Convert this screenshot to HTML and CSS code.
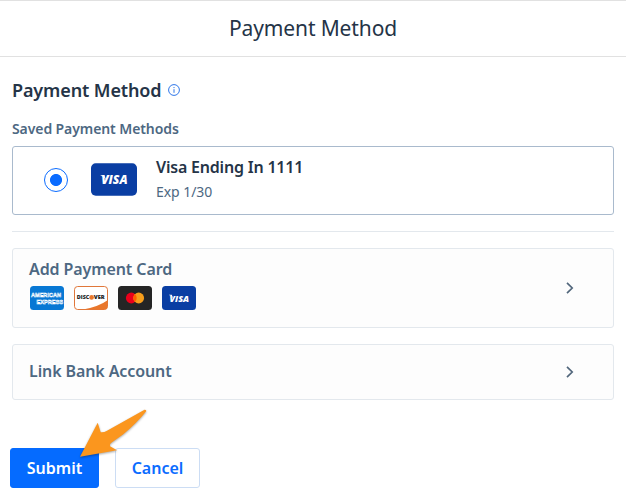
FILE: index.html
```html
<!DOCTYPE html>
<html lang="en">
<head>
    <meta charset="UTF-8">
    <meta name="viewport" content="width=device-width, initial-scale=1.0">
    <title>Payment Method</title>
    <link rel="stylesheet" href="styles.css">
</head>
<body>
    <header class="header">
        <h1>Payment Method</h1>
    </header>

    <main class="container">
        <div class="section-title">
            <h2>Payment Method</h2>
            <svg class="info-icon" viewBox="0 0 12 12">
                <circle cx="6" cy="6" r="5.4"/>
                <path d="M6 5.2v3.6M6 3v1.1"/>
            </svg>
        </div>

        <h3 class="label">Saved Payment Methods</h3>
        <label class="saved-card">
            <input type="radio" name="method" checked>
            <svg class="card-logo" viewBox="0 0 34 24">
                <rect width="34" height="24" rx="3.5" fill="#0a3ea3"/>
                <text class="visa" x="17.3" y="15.5" textLength="19.5" lengthAdjust="spacingAndGlyphs">VISA</text>
                <path d="M7 8.8h2.8l1.4 3.6Q9.6 9.8 7 9.1z" fill="#fff"/>
            </svg>
            <span class="card-info">
                <span class="card-name">Visa Ending In 1111</span>
                <span class="card-exp">Exp 1/30</span>
            </span>
        </label>

        <hr>

        <div class="option option-card">
            <div class="option-body">
                <div class="option-name">Add Payment Card</div>
                <div class="logos">
                    <svg viewBox="0 0 34 24">
                        <rect width="34" height="24" rx="3.5" fill="#0878d4"/>
                        <text class="amex" x="1" y="10.5" textLength="30" lengthAdjust="spacingAndGlyphs">AMERICAN</text>
                        <text class="amex" x="6.5" y="17.7" textLength="26.5" lengthAdjust="spacingAndGlyphs">EXPRESS</text>
                    </svg>
                    <svg viewBox="0 0 34 24">
                        <rect x="0.5" y="0.5" width="33" height="23" rx="3.2" fill="#fff" stroke="#e0773a"/>
                        <path d="M33.5 14.2V20.5a3 3 0 0 1-3 3H9Q25 20.5 33.5 14.2z" fill="#e9772c"/>
                        <text class="discover" x="2.8" y="13.3" textLength="12.5" lengthAdjust="spacingAndGlyphs">DISC</text>
                        <circle cx="17.6" cy="11.4" r="2.3" fill="#e9772c"/>
                        <text class="discover" x="19.7" y="13.3" textLength="11" lengthAdjust="spacingAndGlyphs">VER</text>
                    </svg>
                    <svg viewBox="0 0 34 24">
                        <rect width="34" height="24" rx="3.5" fill="#252525"/>
                        <circle cx="13.3" cy="12" r="5.4" fill="#eb001b"/>
                        <circle cx="20.7" cy="12" r="5.4" fill="#f79e1b"/>
                        <path d="M17 8.07a5.4 5.4 0 0 1 0 7.86a5.4 5.4 0 0 1 0-7.86z" fill="#ff5f00"/>
                    </svg>
                    <svg viewBox="0 0 34 24">
                        <rect width="34" height="24" rx="3.5" fill="#0a3ea3"/>
                        <text class="visa" x="17.3" y="15.5" textLength="19.5" lengthAdjust="spacingAndGlyphs">VISA</text>
                        <path d="M7 8.8h2.8l1.4 3.6Q9.6 9.8 7 9.1z" fill="#fff"/>
                    </svg>
                </div>
            </div>
            <svg class="chevron" viewBox="0 0 8 12">
                <path d="M1 0.8L6.2 6L1 11.2"/>
            </svg>
        </div>

        <div class="option">
            <div class="option-name">Link Bank Account</div>
            <svg class="chevron" viewBox="0 0 8 12">
                <path d="M1 0.8L6.2 6L1 11.2"/>
            </svg>
        </div>
    </main>

    <div class="actions">
        <button class="btn btn-primary">Submit</button>
        <button class="btn">Cancel</button>
        <svg class="pointer" viewBox="0 0 76 56">
            <path d="M4 51.7L21.7 17.7L24.7 27.3Q28 27.6 31 25.8L68.500 4.7Q70.700 4.500 70.2 6.300Q61 18 47 29.500L35 38Q33.400 39.500 34 41.200L41 45.200z"/>
        </svg>
    </div>
</body>
</html>
```
FILE: styles.css
```css
:root {
    --text: #253447;
    --muted: #4d6882;
    --blue: #0b6cff;
    --border: #e3e8ed;
    --card-border: #a9bacd;
}

* {
    box-sizing: border-box;
}

body {
    margin: 0;
    font-family: "Noto Sans", sans-serif;
    color: var(--text);
    background-color: #fff;
    overflow: hidden;
}

h1, h2, h3 {
    margin: 0;
}

.header {
    height: 57px;
    border-top: 1px solid #e1e1e1;
    border-bottom: 1px solid #e1e1e1;
    text-align: center;
}

.header h1 {
    font-size: 21px;
    font-weight: 400;
    line-height: 54px;
    letter-spacing: -0.12px;
}

.container {
    padding: 21px 12px 0;
}

.section-title {
    display: flex;
    align-items: center;
    gap: 7px;
    height: 24px;
}

.section-title h2 {
    font-size: 18px;
    font-weight: 600;
    line-height: 24px;
    letter-spacing: -0.12px;
}

.info-icon {
    width: 12px;
    height: 12px;
    fill: none;
    stroke: #2f76e8;
}

.label {
    margin-top: 17px;
    font-size: 14px;
    font-weight: 600;
    line-height: 20px;
    letter-spacing: -0.09px;
    color: var(--muted);
}

.saved-card {
    display: flex;
    align-items: center;
    height: 69px;
    margin-top: 7px;
    padding: 0 31px 1px;
    border: 1px solid var(--card-border);
    border-radius: 3px;
}

.saved-card input {
    appearance: none;
    width: 24px;
    height: 24px;
    margin: 0;
    border: 1.5px solid var(--blue);
    border-radius: 50%;
    background: radial-gradient(circle, var(--blue) 5.6px, #fff 6.4px);
}

.card-logo {
    width: 46px;
    height: 33px;
    margin: 0 19px 1px 23px;
}

.visa {
    font: italic 800 9px "Open Sans", sans-serif;
    text-anchor: middle;
    fill: #fff;
}

.card-info {
    display: flex;
    flex-direction: column;
    gap: 4px;
    padding-bottom: 2px;
}

.card-name {
    font-size: 16px;
    font-weight: 600;
    line-height: 22px;
    letter-spacing: -0.2px;
}

.card-exp {
    font-size: 14px;
    line-height: 20px;
    letter-spacing: -0.05px;
    color: var(--muted);
}

hr {
    height: 1px;
    margin: 16px 0;
    border: none;
    background-color: var(--border);
}

.option {
    display: flex;
    align-items: center;
    justify-content: space-between;
    height: 56px;
    padding: 0 39px 0 16px;
    margin-bottom: 16px;
    border: 1px solid var(--border);
    border-radius: 3px;
    background-color: #fdfdfd;
}

.option-card {
    height: 80px;
}

.option-body {
    padding-bottom: 8px;
}

.option-name {
    font-size: 16px;
    font-weight: 600;
    line-height: 22px;
    padding-bottom: 2px;
    letter-spacing: -0.1px;
    color: var(--muted);
}

.logos {
    display: flex;
    gap: 10px;
    margin: 4px 0 0 1px;
}

.logos svg {
    width: 34px;
    height: 24px;
}

.amex {
    font: 700 6.2px "Liberation Sans", sans-serif;
    fill: #0878d4;
    stroke: #fff;
    stroke-width: 0.55px;
}

.discover {
    font: 800 5.4px "Open Sans", sans-serif;
    fill: #222;
}

.chevron {
    width: 8px;
    height: 12px;
    fill: none;
    stroke: #52677c;
    stroke-width: 1.7px;
}

.actions {
    position: relative;
    display: flex;
    gap: 16px;
    padding: 32px 10px 0;
}

.btn {
    width: 85px;
    height: 40px;
    padding: 0;
    font-family: inherit;
    font-size: 16px;
    font-weight: 600;
    color: var(--blue);
    background-color: #fff;
    border: 1px solid #ccddf4;
    border-radius: 3px;
}

.btn-primary {
    width: 89px;
    color: #fff;
    background-color: #056bff;
    border-color: #056bff;
}

/* arrow pointing at the submit button */
.pointer {
    position: absolute;
    top: -11px;
    left: 76px;
    width: 76px;
    height: 56px;
    fill: #fb961e;
    filter: drop-shadow(0 1px 1px rgba(0, 0, 0, 0.35));
}
```
